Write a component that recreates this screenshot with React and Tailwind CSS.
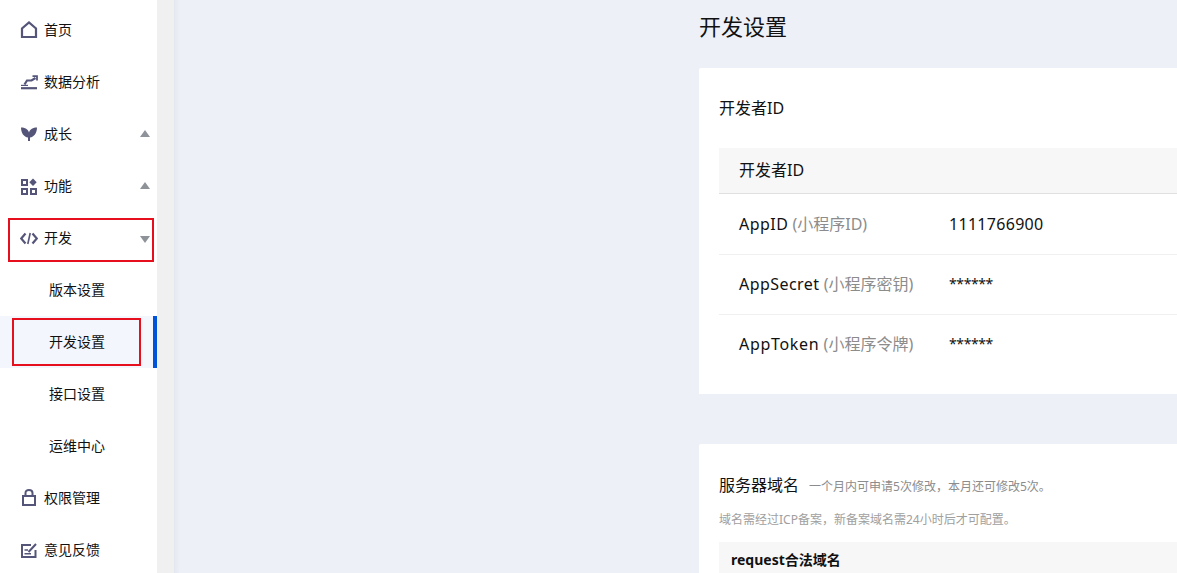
import React from 'react';

const FONT = "font-['Noto_Sans','Noto_Sans_CJK_SC',sans-serif]";

const HomeIcon = () => (
  <svg width="18" height="18" viewBox="0 0 18 18" fill="none" stroke="#55557a" strokeWidth="2.2">
    <path d="M2 16V7.5L9 1.5L16 7.5V16Z" />
  </svg>
);

const ChartIcon = () => (
  <svg width="18" height="18" viewBox="0 0 18 18" fill="none" stroke="#55557a" strokeWidth="2.2">
    <path d="M1 15.2H17" />
    <path d="M1 12.4H8" strokeWidth="1.2" />
    <path d="M4.5 11.5L7 7.5H11.5L15.5 5" />
    <path d="M12.5 3.2H17V7.5" strokeWidth="1.8" />
  </svg>
);

const PlantIcon = () => (
  <svg width="18" height="18" viewBox="0 0 18 18" fill="#55557a">
    <path d="M1 2.5C5 2.5 8 4 9 7.5C10 4 13 2.5 17 2.5C17 8 14 12 10 12.5V16H8V12.5C4 12 1 8 1 2.5Z" />
  </svg>
);

const GridIcon = () => (
  <svg width="18" height="18" viewBox="0 0 18 18" fill="none" stroke="#55557a" strokeWidth="2">
    <rect x="2" y="3" width="5" height="5" />
    <rect x="2" y="12" width="5" height="5" />
    <rect x="11" y="12" width="5" height="5" />
    <path d="M13 1.5L16.7 5.3L13 9.1L9.3 5.3Z" fill="#55557a" stroke="none" />
  </svg>
);

const CodeIcon = () => (
  <svg width="18" height="18" viewBox="0 0 18 18" fill="none" stroke="#55557a" strokeWidth="2.2">
    <path d="M5.5 4.5L1.2 9.5L5.5 14.5" />
    <path d="M12.5 4.5L16.8 9.5L12.5 14.5" />
    <path d="M10.2 4L7.8 15" strokeWidth="1.6" />
  </svg>
);

const LockIcon = () => (
  <svg width="18" height="18" viewBox="0 0 18 18" fill="none" stroke="#55557a" strokeWidth="2">
    <rect x="3" y="7" width="12" height="9" />
    <path d="M5.5 7V4C5.5 2.2 6.8 1 9 1C11.2 1 12.5 2.2 12.5 4V7" />
  </svg>
);

const EditIcon = () => (
  <svg width="18" height="18" viewBox="0 0 18 18" fill="none" stroke="#55557a" strokeWidth="2">
    <path d="M11 4H2V16H15.5V9" />
    <path d="M4.5 9H8M4.5 12.8H11" strokeWidth="1.5" />
    <path d="M8.5 11L16 3" />
  </svg>
);

function NavItem({ icon, label, arrow }) {
  return (
    <div className="relative flex h-[52px] items-center pl-[20px] text-sm text-[#111]">
      <span className="flex w-[24px] shrink-0">{icon}</span>
      <span>{label}</span>
      {arrow === 'up' && (
        <span className="absolute right-[7px] top-[22px] h-0 w-0 border-x-[5px] border-b-[7px] border-x-transparent border-b-[#8e9299]" />
      )}
      {arrow === 'down' && (
        <span className="absolute right-[7px] top-[24px] h-0 w-0 border-x-[5px] border-t-[7px] border-x-transparent border-t-[#8e9299]" />
      )}
    </div>
  );
}

function SubItem({ label, active }) {
  return (
    <div
      className={[
        'flex h-[52px] items-center pl-[49px] text-sm text-[#111]',
        active ? 'border-r-4 border-[#0052d9] bg-[#f3f6fd]' : '',
      ].join(' ')}
    >
      {label}
    </div>
  );
}

function Row({ name, note, value, masked, nameClass = 'tracking-[0.45px]' }) {
  return (
    <div className="flex h-[60px] items-center border-b border-[#f0f0f0] pb-px pl-[20px] text-base last:border-transparent">
      <div className="w-[210px] shrink-0 text-[#111]">
        <span className={nameClass}>{name}</span> <span className="text-[#8c8c8c]">({note})</span>
      </div>
      <div className={masked ? 'text-sm tracking-[-0.4px] text-[#111]' : 'tracking-[0.3px] text-[#111]'}>{value}</div>
    </div>
  );
}

export default function App() {
  return (
    <div className={`relative flex h-[573px] w-[1177px] overflow-hidden bg-[#edf0f7] ${FONT}`}>
      {/* Sidebar */}
      <aside className="w-[157px] shrink-0 bg-white pt-[4px]">
        <NavItem icon={<HomeIcon />} label="首页" />
        <NavItem icon={<ChartIcon />} label="数据分析" />
        <NavItem icon={<PlantIcon />} label="成长" arrow="up" />
        <NavItem icon={<GridIcon />} label="功能" arrow="up" />
        <NavItem icon={<CodeIcon />} label="开发" arrow="down" />
        <SubItem label="版本设置" />
        <SubItem label="开发设置" active />
        <SubItem label="接口设置" />
        <SubItem label="运维中心" />
        <NavItem icon={<LockIcon />} label="权限管理" />
        <NavItem icon={<EditIcon />} label="意见反馈" />
      </aside>

      {/* Gray strip next to the sidebar */}
      <div className="w-[17px] shrink-0 bg-[#f0f0f0]" />

      {/* Main content */}
      <main className="min-w-0 flex-1 pl-[525px]">
        <h1 className="flex h-[68px] items-center pb-[16px] text-[22px] font-normal text-[#111]">开发设置</h1>

        <section className="h-[326px] rounded-tl-[2px] bg-white pl-[20px]">
          <div className="flex h-[80px] items-center text-base text-[#111]">开发者ID</div>
          <div className="flex h-[46px] items-center border-b border-[#e0e0e0] bg-[#f7f7f7] pb-[2px] pl-[20px] text-base text-[#111]">
            开发者ID
          </div>
          <div className="pt-px">
            <Row name="AppID" note="小程序ID" value="1111766900" />
            <Row name="AppSecret" note="小程序密钥" value="******" masked />
            <Row name="AppToken" note="小程序令牌" value="******" masked nameClass="tracking-[0.7px]" />
          </div>
        </section>

        <section className="mt-[50px] h-[129px] rounded-tl-[2px] bg-white pl-[20px]">
          <div className="flex items-baseline pt-[29px]">
            <span className="text-base leading-[24px] text-[#111]">服务器域名</span>
            <span className="ml-[10px] text-xs text-[#8c8c8c]">一个月内可申请5次修改，本月还可修改5次。</span>
          </div>
          <div className="mt-[14px] text-xs leading-[18px] text-[#a0a0a0]">域名需经过ICP备案，新备案域名需24小时后才可配置。</div>
          <div className="mt-[13px] flex h-[40px] items-start bg-[#f7f7f7] pl-[12px] pt-[8px] text-sm font-bold text-[#111]">
            request合法域名
          </div>
        </section>
      </main>

      {/* Red annotation boxes */}
      <div className="absolute left-[8px] top-[218px] h-[44px] w-[146px] border-2 border-[#e60f1e]" />
      <div className="absolute left-[12px] top-[318px] h-[48px] w-[129px] border-2 border-[#e60f1e]" />

      {/* Edge shadow on the main area */}
      <div className="absolute left-[174px] top-0 h-full w-[6px] bg-gradient-to-r from-[#e4e7ef] to-transparent" />
    </div>
  );
}
